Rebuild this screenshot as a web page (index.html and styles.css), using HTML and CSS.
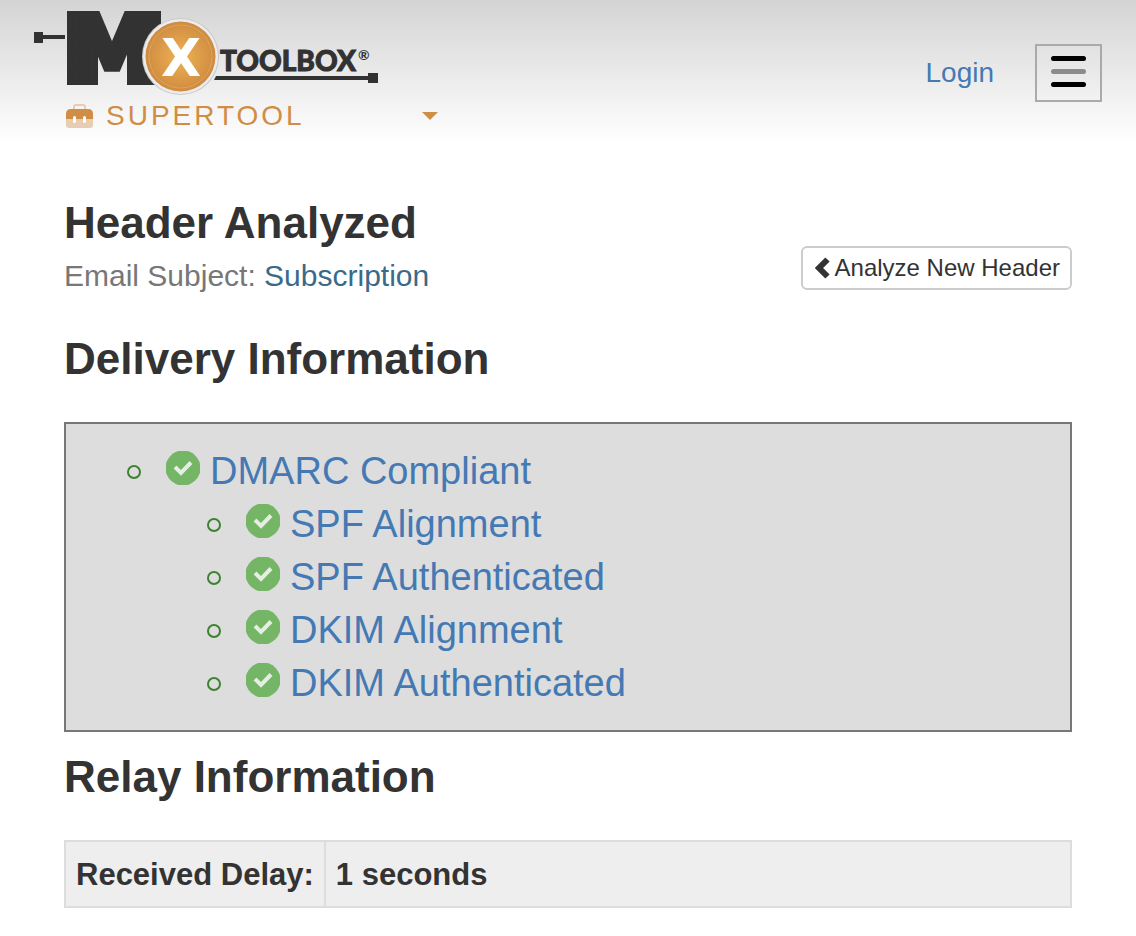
FILE: index.html
```html
<!DOCTYPE html>
<html lang="en">
<head>
<meta charset="utf-8">
<meta name="viewport" content="width=device-width, initial-scale=1">
<title>Header Analyzed - MxToolbox</title>
<link rel="stylesheet" href="styles.css">
</head>
<body>
<header class="site-header">
  <div class="brand">
    <a class="logo-link" href="#" aria-label="MxToolbox home">
      <svg class="logo" width="346" height="88" viewBox="33 8 346 88">
        <defs>
          <radialGradient id="disc"><stop offset="0" stop-color="#efb355"/><stop offset="1" stop-color="#cf8b40"/></radialGradient>
        </defs>
        <g fill="#323232">
          <path d="M34 32h9v3h22v4H43v4h-9z"/>
          <rect x="67" y="11" width="31" height="74"/>
          <rect x="127" y="11" width="34" height="74"/>
          <text class="logo-m" x="112" y="81" text-anchor="middle">M</text>
          <path d="M214 80l2-4h152v-3h10v10h-10v-3z"/>
          <text class="logo-word" x="220" y="71">TOOLBOX</text>
          <text class="logo-reg" x="358" y="60">®</text>
        </g>
        <circle cx="180.500" cy="56.500" r="38.500" fill="#c9c9c9"/>
        <circle cx="180.500" cy="56.500" r="37.500" fill="#ececec"/>
        <circle cx="180.500" cy="56.500" r="35" fill="url(#disc)"/>
        <circle cx="180.500" cy="56.500" r="31.500" fill="none" stroke="#dda45c" stroke-width="1"/>
        <text class="logo-x" x="181" y="76" text-anchor="middle">X</text>
      </svg>
    </a>
    <button class="tool-menu" type="button">
      <svg width="27" height="24" viewBox="0 0 27 24" aria-hidden="true">
        <path d="M8 6V3q0-2 2-2h7q2 0 2 2v3" fill="none" stroke="#e8cdb0" stroke-width="2"/>
        <path d="M0 15V10q0-5 5-5h17q5 0 5 5v5z" fill="#cf8d45"/>
        <path d="M0 15h27v6q0 3-3 3H3q-3 0-3-3z" fill="#e8cdb0"/>
        <rect x="7" y="12" width="3" height="7" rx="1.500" fill="#fff"/>
        <rect x="17" y="12" width="3" height="7" rx="1.500" fill="#fff"/>
      </svg>
      <span class="tool-name">SUPERTOOL</span>
      <svg class="caret" width="16" height="8" viewBox="0 0 16 8" aria-hidden="true"><path d="M0 0h16L8 8z" fill="#cf8d45"/></svg>
    </button>
  </div>
  <nav class="actions">
    <a class="login" href="#">Login</a>
    <button class="hamburger" type="button" aria-label="Menu"><span></span><span></span><span></span></button>
  </nav>
</header>
<main class="content">
  <div class="title-row">
    <div>
      <h1>Header Analyzed</h1>
      <p class="subject">Email Subject: <a href="#">Subscription</a></p>
    </div>
    <button class="new-header" type="button">
      <svg width="15" height="22" viewBox="0 0 15 22" aria-hidden="true"><path d="M12.500 2.500L4 11l8.500 8.500" fill="none" stroke="#333" stroke-width="6"/></svg>
      <span>Analyze New Header</span>
    </button>
  </div>
  <h2>Delivery Information</h2>
  <svg class="symbols" aria-hidden="true">
    <symbol id="check" viewBox="0 0 34 34"><circle cx="17" cy="17" r="17.500" fill="#74b566"/><path d="M9 16l6 6L25 11.500" fill="none" stroke="#e4eee1" stroke-width="4"/></symbol>
  </svg>
  <ul class="checks">
    <li>
      <a href="#"><svg class="tick"><use href="#check"/></svg>DMARC Compliant</a>
      <ul>
        <li><a href="#"><svg class="tick"><use href="#check"/></svg>SPF Alignment</a></li>
        <li><a href="#"><svg class="tick"><use href="#check"/></svg>SPF Authenticated</a></li>
        <li><a href="#"><svg class="tick"><use href="#check"/></svg>DKIM Alignment</a></li>
        <li><a href="#"><svg class="tick"><use href="#check"/></svg>DKIM Authenticated</a></li>
      </ul>
    </li>
  </ul>
  <h2>Relay Information</h2>
  <table class="relay">
    <tbody><tr><th scope="row">Received Delay:</th><td>1 seconds</td></tr></tbody>
  </table>
</main>
</body>
</html>
```

FILE: styles.css
```css
*, *::before { box-sizing: border-box; }
body {
  margin: 0;
  background: #fff;
  color: #333;
  font-family: "Liberation Sans", Arial, sans-serif;
}
a { color: #4579b3; text-decoration: none; }
button { font-family: inherit; cursor: pointer; }

.site-header {
  display: flex;
  justify-content: space-between;
  align-items: flex-start;
  padding: 8px 34px 12px 33px;
  background: linear-gradient(#d4d4d4, #fff);
}
.logo-link, .logo { display: block; }
.logo { overflow: visible; }
.logo-m { font: bold 90px "DejaVu Sans", sans-serif; stroke: #323232; stroke-width: 7px; stroke-miterlimit: 8; }
.logo-word { font: 900 28px Lato, sans-serif; stroke: #323232; stroke-width: 1px; }
.logo-reg { font: bold 14px Lato, sans-serif; }
.logo-x { font: bold 52px "DejaVu Sans", sans-serif; fill: #fff; }
.tool-menu {
  display: flex;
  align-items: center;
  width: 405px;
  padding: 4px 0 0 33px;
  border: 0;
  background: none;
  color: #cf8d45;
  font-size: 28px;
  line-height: 32px;
}
.tool-name { margin-left: 13px; letter-spacing: 3px; }
.caret { margin-left: auto; }
.actions { display: flex; align-items: center; gap: 41px; padding-top: 36px; }
.login { font-size: 28px; line-height: 32px; }
.hamburger {
  display: flex;
  flex-direction: column;
  align-items: center;
  gap: 8px;
  width: 67px;
  height: 58px;
  padding: 10px 0;
  border: 2px solid #aaa;
  background: none;
}
.hamburger span { width: 35px; height: 5px; border-radius: 3px; background: #000; }
.hamburger span:nth-child(2) { background: #8c8c8c; }

.content { padding: 55px 64px 28px; }
.title-row { display: flex; justify-content: space-between; align-items: flex-end; }
h1, h2 { margin: 0; font-size: 44px; line-height: 48px; }
.subject { margin: 12px 0 0; color: #777; font-size: 30px; line-height: 34px; }
.subject a { color: #3a6a87; }
.new-header {
  display: flex;
  align-items: center;
  gap: 5px;
  height: 44px;
  padding: 0 10px 0 12px;
  margin-bottom: 3px;
  border: 2px solid #ccc;
  border-radius: 6px;
  background: #fff;
  color: #333;
  font-size: 24px;
}
h2 { margin-top: 42px; }
.symbols { display: none; }
.checks {
  margin: 39px 0 0;
  padding: 21px 20px 20px 61px;
  border: 2px solid #777;
  background: #ddd;
  color: #4579b3;
  font-size: 38px;
  line-height: 53px;
  list-style: none;
}
.checks ul { margin: 0; padding: 0 0 0 80px; list-style: none; }
.checks a { display: flex; align-items: center; }
.checks a::before {
  content: "";
  width: 14px;
  height: 14px;
  margin: 1px 25px 0 0;
  border: 2px solid #3c8230;
  border-radius: 50%;
}
.tick { width: 34px; height: 34px; margin: 0 10px 8px 0; }
.checks + h2 { margin-top: 21px; }
.relay {
  width: 100%;
  margin-top: 39px;
  border-collapse: collapse;
  background: #eee;
  font-size: 31px;
  font-weight: bold;
  line-height: 36px;
  text-align: left;
}
.relay th, .relay td { padding: 15px 10px 13px; border: 2px solid #ddd; }
.relay th { width: 1%; white-space: nowrap; }
```
